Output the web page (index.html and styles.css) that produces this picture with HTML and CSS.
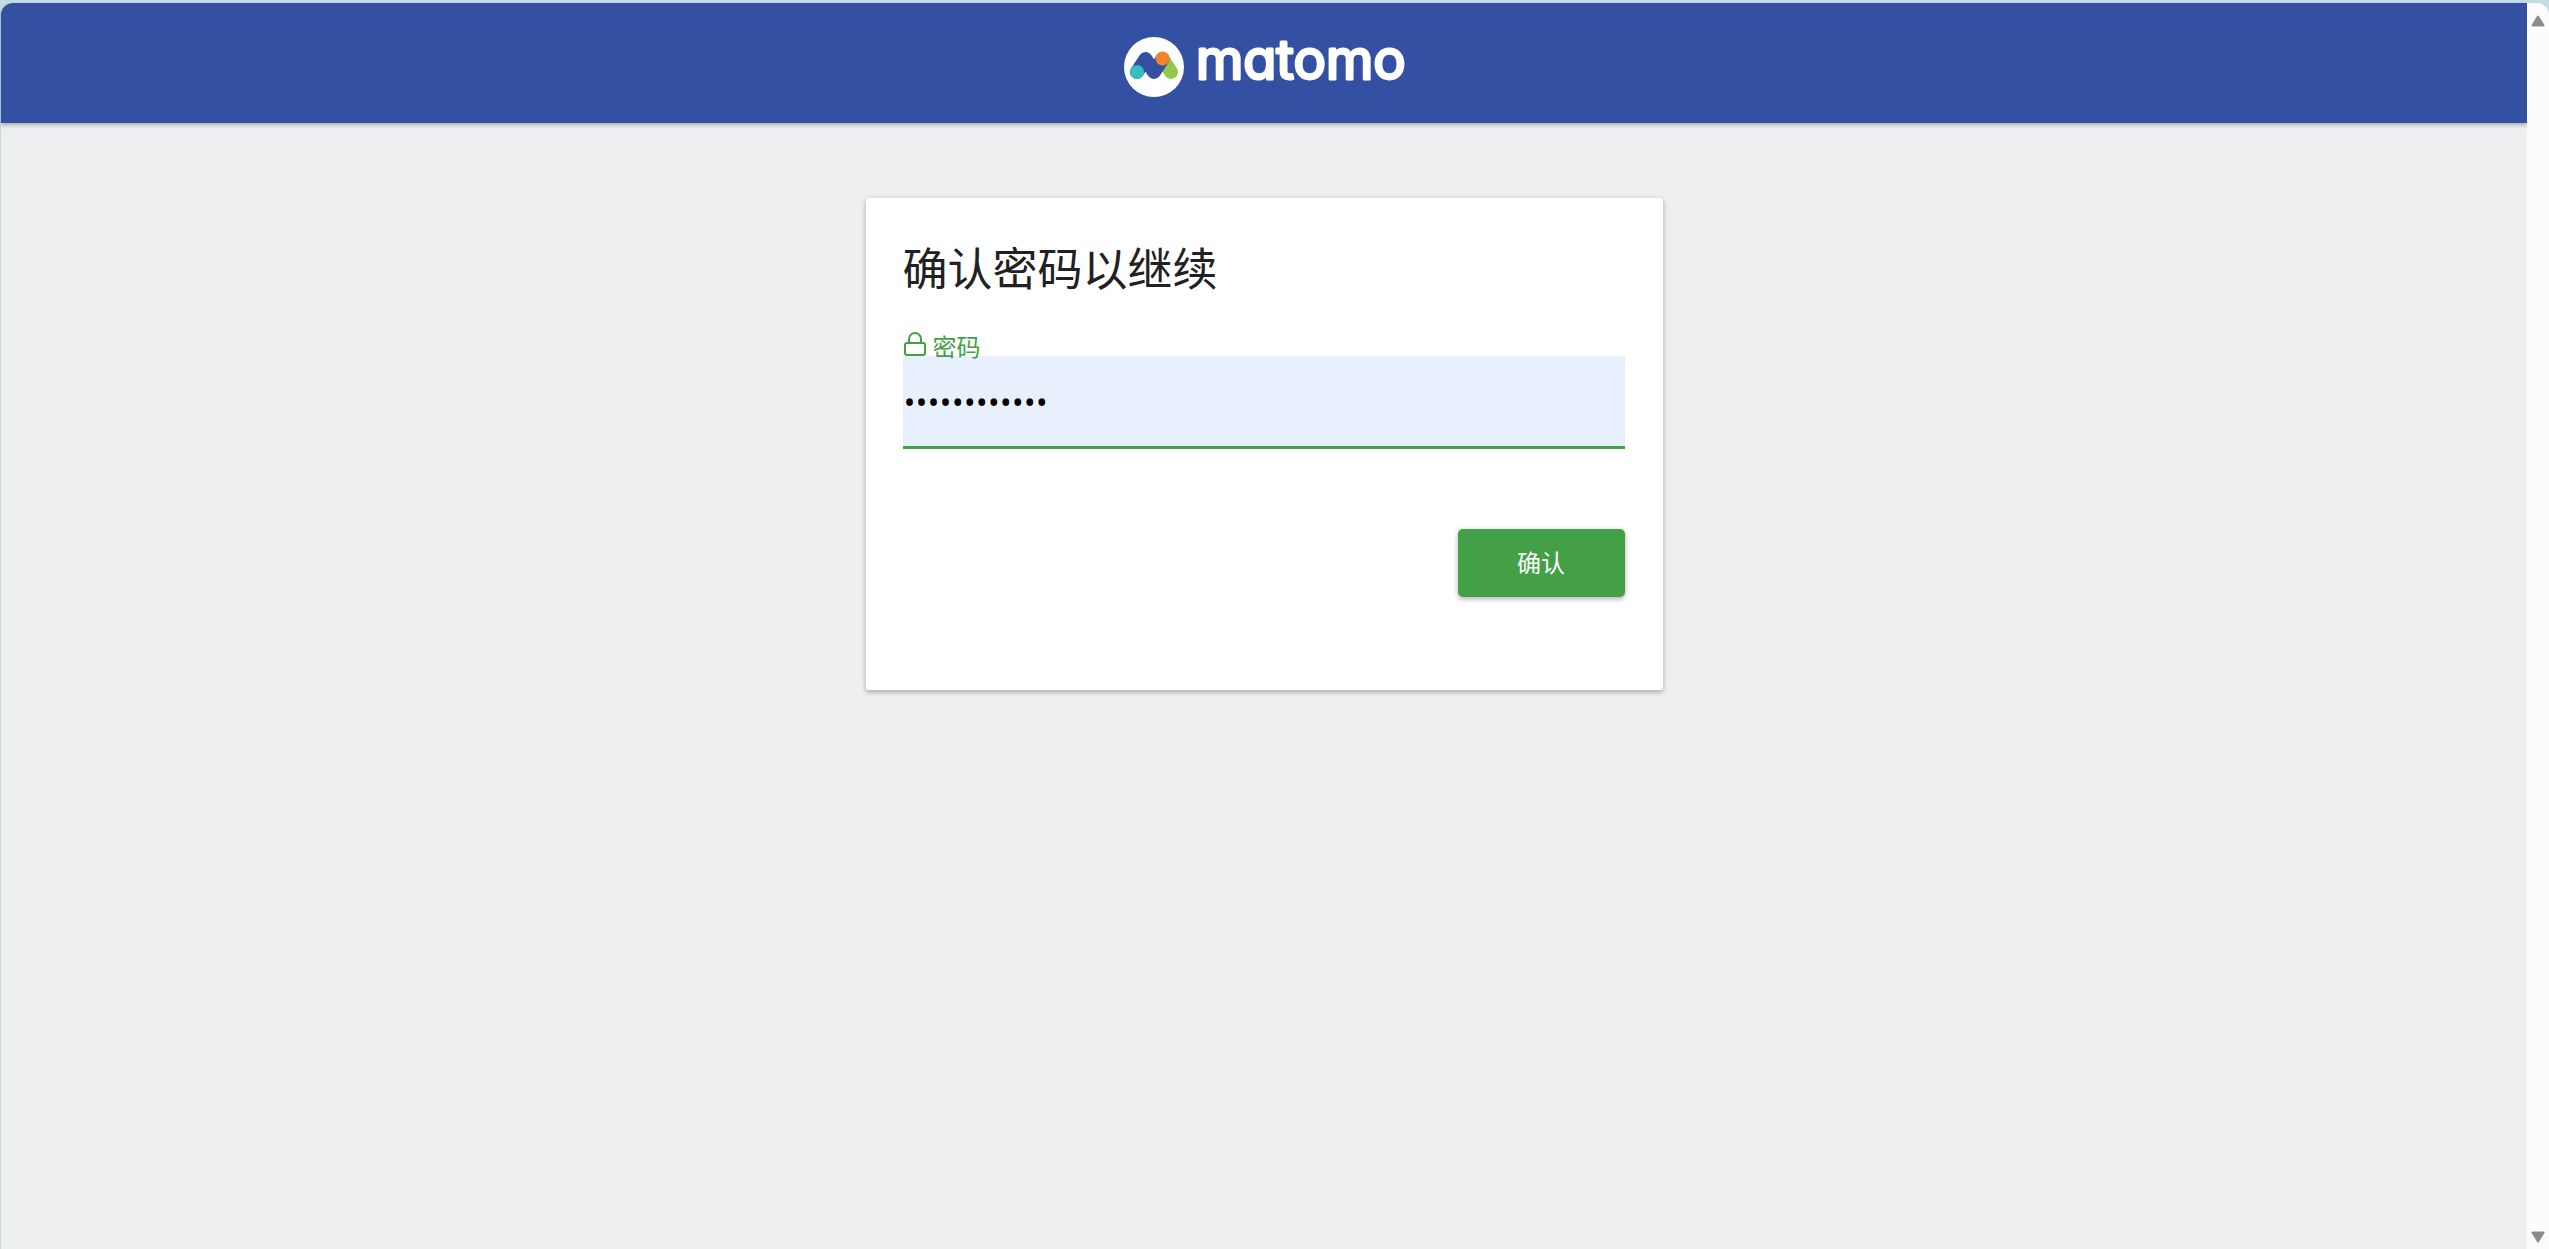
FILE: index.html
```html
<!DOCTYPE html>
<html lang="zh-CN">
<head>
<meta charset="utf-8">
<title>确认密码以继续</title>
<link rel="stylesheet" href="styles.css">
</head>
<body>
<div class="window">
  <div class="page">
    <header class="topbar">
      <a class="brand" href="#">
        <svg class="brand-logo" viewBox="0 0 280 60">
          <circle cx="30" cy="30" r="30" fill="#fff"/>
          <path d="M38.500 22 L47 35" fill="none" stroke="#95c748" stroke-width="14" stroke-linecap="round"/>
          <path d="M13 35 L21.500 22 L30 35 L38.500 22" fill="none" stroke="#3450a3" stroke-width="14" stroke-linecap="round" stroke-linejoin="round"/>
          <circle cx="13" cy="35" r="7" fill="#35bfc0"/>
          <circle cx="38.500" cy="21.500" r="7" fill="#f38334"/>
          <text class="brand-name" x="72" y="42">matomo</text>
        </svg>
      </a>
    </header>
    <main class="content">
      <form class="card">
        <h1 class="card-title">确认密码以继续</h1>
        <label class="field-label" for="password">
          <svg class="lock" viewBox="0 0 24 26" aria-hidden="true" fill="none" stroke="currentColor" stroke-width="2">
            <rect x="2" y="12" width="20" height="12" rx="2"/>
            <path d="M6 12V8a6 6 0 0 1 12 0v4"/>
          </svg>
          <span>密码</span>
        </label>
        <input class="field" id="password" type="password" value="abcdefghijkl">
        <div class="actions">
          <button class="submit" type="button">确认</button>
        </div>
      </form>
    </main>
  </div>
  <div class="scrollbar" aria-hidden="true">
    <svg class="arrow" viewBox="0 0 14 12"><path d="M7 1.500 12.500 10.500H1.500Z"/></svg>
    <svg class="arrow" viewBox="0 0 14 12"><path d="M7 10.500 12.500 1.500H1.500Z"/></svg>
  </div>
</div>
</body>
</html>
```
FILE: styles.css
```css
* {
  box-sizing: border-box;
}

body {
  margin: 0;
  background: #c3dde1;
  font-family: "Noto Sans CJK SC", sans-serif;
}

.window {
  display: flex;
  min-height: 100vh;
  padding: 3px 0 0 1px;
}

.page {
  flex: 1;
  background: #eeeff1;
  border-top-left-radius: 12px;
}

.topbar {
  display: flex;
  justify-content: center;
  align-items: center;
  height: 120px;
  background: #3450a3;
  border-top-left-radius: 12px;
  box-shadow: 0 2px 4px rgba(0, 0, 0, 0.3);
}

.brand {
  display: flex;
  padding-top: 8px;
}

.brand-logo {
  width: 280px;
  height: 60px;
  overflow: visible;
}

.brand-name {
  font: 400 54px Inter, sans-serif;
  font-feature-settings: "cv11";
  font-optical-sizing: none;
  fill: #fff;
  stroke: #fff;
  stroke-width: 3px;
  stroke-linejoin: round;
}

.content {
  display: flex;
  justify-content: center;
  padding-top: 75px;
}

.card {
  width: 797px;
  max-width: 100%;
  padding: 36px 38px 93px 37px;
  background: #fff;
  border-radius: 3px;
  box-shadow: 0 3px 4px rgba(0, 0, 0, 0.16), 0 1px 6px rgba(0, 0, 0, 0.16);
}

.card-title {
  margin: 0;
  color: #212121;
  font-size: 45px;
  font-weight: 400;
  line-height: 66px;
}

.field-label {
  position: relative;
  display: flex;
  align-items: center;
  gap: 6px;
  margin: 30px 0 -6px;
  color: #43a047;
  font-size: 24px;
  line-height: 32px;
}

.lock {
  width: 24px;
  height: 26px;
  margin-bottom: 4px;
}

.field {
  display: block;
  width: 100%;
  height: 93px;
  padding: 0 1px;
  background: #e8effd;
  border: 0;
  border-bottom: 3px solid #43a047;
  border-radius: 0;
  color: #000;
  font: 32px "Open Sans", sans-serif;
  outline: 0;
}

.actions {
  display: flex;
  justify-content: flex-end;
  margin-top: 80px;
}

.submit {
  width: 167px;
  height: 68px;
  padding: 0 0 3px;
  background: #43a047;
  border: 0;
  border-radius: 5px;
  box-shadow: 0 3px 4px rgba(0, 0, 0, 0.16), 0 1px 6px rgba(0, 0, 0, 0.16);
  color: #fff;
  font: 24px "Noto Sans CJK SC", sans-serif;
}

.scrollbar {
  display: flex;
  flex-direction: column;
  align-items: center;
  justify-content: space-between;
  width: 22px;
  padding: 12px 0 6px;
  background: #fcfcfc;
  border-top-right-radius: 12px;
}

.arrow {
  width: 14px;
  height: 12px;
  fill: #8b8b8b;
  stroke: #8b8b8b;
  stroke-width: 2px;
  stroke-linejoin: round;
}
```
